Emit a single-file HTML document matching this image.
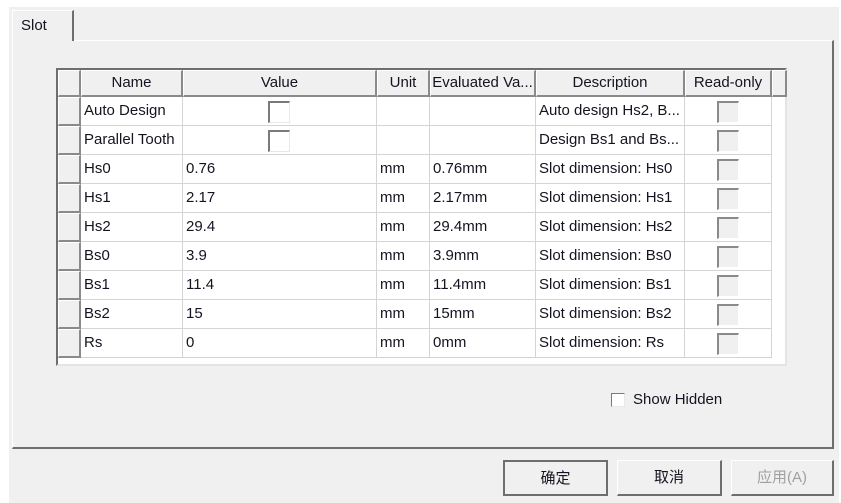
<!DOCTYPE html>
<html><head><meta charset="utf-8"><style>
*{margin:0;padding:0;box-sizing:border-box}
body{width:841px;height:503px;background:#fff;position:relative;overflow:hidden;font-family:"Liberation Sans","Noto Sans CJK SC",sans-serif;font-size:15px;color:#141420}
.a{position:absolute}
.bg{left:9px;top:7px;width:830px;height:496px;background:#f0f0f0}
.panel{left:12px;top:40px;width:822px;height:409px;border-left:1px solid #fff;border-top:1px solid #fff;border-right:2px solid #6e6e6e;border-bottom:2px solid #6e6e6e}
.tab{left:12px;top:10px;width:62px;height:31px;background:#f0f0f0;border-left:1px solid #fff;border-top:1px solid #fff;border-right:2px solid #6e6e6e;padding:6px 0 0 8px;font-size:15px}
.tbl{left:56px;top:68px;width:731px;height:298px;background:#fff;border-left:2px solid #6e6e6e;border-top:2px solid #6e6e6e;border-bottom:2px solid #e4e4e4;border-right:2px solid #e4e4e4}
.h{position:absolute;top:70px;height:27px;background:#f0f0f0;border-right:2px solid #8a8a8a;border-bottom:2px solid #8a8a8a;border-left:1px solid #fff;border-top:1px solid #fff;text-align:center;line-height:24px;white-space:nowrap;overflow:hidden}
.rh{position:absolute;left:58px;width:23px;height:29px;background:#f0f0f0;border-right:2px solid #8a8a8a;border-bottom:2px solid #8a8a8a;border-left:1px solid #fff;border-top:1px solid #fff}
.c{position:absolute;height:29px;border-right:1px solid #d4d4d4;border-bottom:1px solid #d4d4d4;line-height:28px;padding-left:3px;white-space:nowrap;overflow:hidden}
.cb{position:absolute;width:22px;height:22px;background:#fff;border-left:2px solid #7a7a7a;border-top:2px solid #7a7a7a;border-right:1px solid #e8e8e8;border-bottom:1px solid #e8e8e8}
.ro{position:absolute;width:22px;height:22px;background:#f0f0f0;border-left:2px solid #8a8a8a;border-top:2px solid #8a8a8a;border-right:1px solid #fff;border-bottom:1px solid #fff}
.btn{position:absolute;top:460px;height:36px;background:#f0f0f0;border-left:1px solid #fff;border-top:1px solid #fff;border-right:2px solid #6e6e6e;border-bottom:2px solid #6e6e6e;text-align:center;line-height:33px;font-size:15px}
</style></head><body>
<div class="a bg"></div>
<div class="a panel"></div>
<div class="a tab">Slot</div>
<div class="a tbl"></div>
<div class="h" style="left:58px;width:23px"></div>
<div class="h" style="left:81px;width:102px">Name</div>
<div class="h" style="left:183px;width:194px">Value</div>
<div class="h" style="left:377px;width:53px">Unit</div>
<div class="h" style="left:430px;width:106px">Evaluated Va...</div>
<div class="h" style="left:536px;width:149px">Description</div>
<div class="h" style="left:685px;width:87px">Read-only</div>
<div class="h" style="left:772px;width:15px"></div>
<div id="rows"></div>
<script>
var d=[["Auto Design","","","","Auto design Hs2, B...",1],["Parallel Tooth","","","","Design Bs1 and Bs...",1],
["Hs0","0.76","mm","0.76mm","Slot dimension: Hs0"],["Hs1","2.17","mm","2.17mm","Slot dimension: Hs1"],
["Hs2","29.4","mm","29.4mm","Slot dimension: Hs2"],["Bs0","3.9","mm","3.9mm","Slot dimension: Bs0"],
["Bs1","11.4","mm","11.4mm","Slot dimension: Bs1"],["Bs2","15","mm","15mm","Slot dimension: Bs2"],
["Rs","0","mm","0mm","Slot dimension: Rs"]];
var cols=[[81,102],[183,194],[377,53],[430,106],[536,149],[685,87]];
var h="";
d.forEach(function(r,i){var y=97+i*29;
h+='<div class="rh" style="top:'+y+'px"></div>';
for(var j=0;j<6;j++){var t=j<5?r[j]:"";h+='<div class="c" style="left:'+cols[j][0]+'px;top:'+y+'px;width:'+cols[j][1]+'px">'+t+'</div>';}
if(r[5])h+='<div class="cb" style="left:268px;top:'+(y+4)+'px"></div>';
h+='<div class="ro" style="left:717px;top:'+(y+4)+'px"></div>';
});
document.getElementById("rows").innerHTML=h;
</script>
<div class="cb" style="left:611px;top:393px;width:14px;height:14px;border-width:1px 1px 1px 1px;border-color:#7a7a7a #e8e8e8 #e8e8e8 #7a7a7a"></div>
<div class="a" style="left:633px;top:391px">Show Hidden</div>
<div class="btn" style="left:503px;width:105px;border:2px solid #6e6e6e">确定</div>
<div class="btn" style="left:617px;width:105px">取消</div>
<div class="btn" style="left:731px;width:103px;color:#a0a0a0">应用(A)</div>
</body></html>
